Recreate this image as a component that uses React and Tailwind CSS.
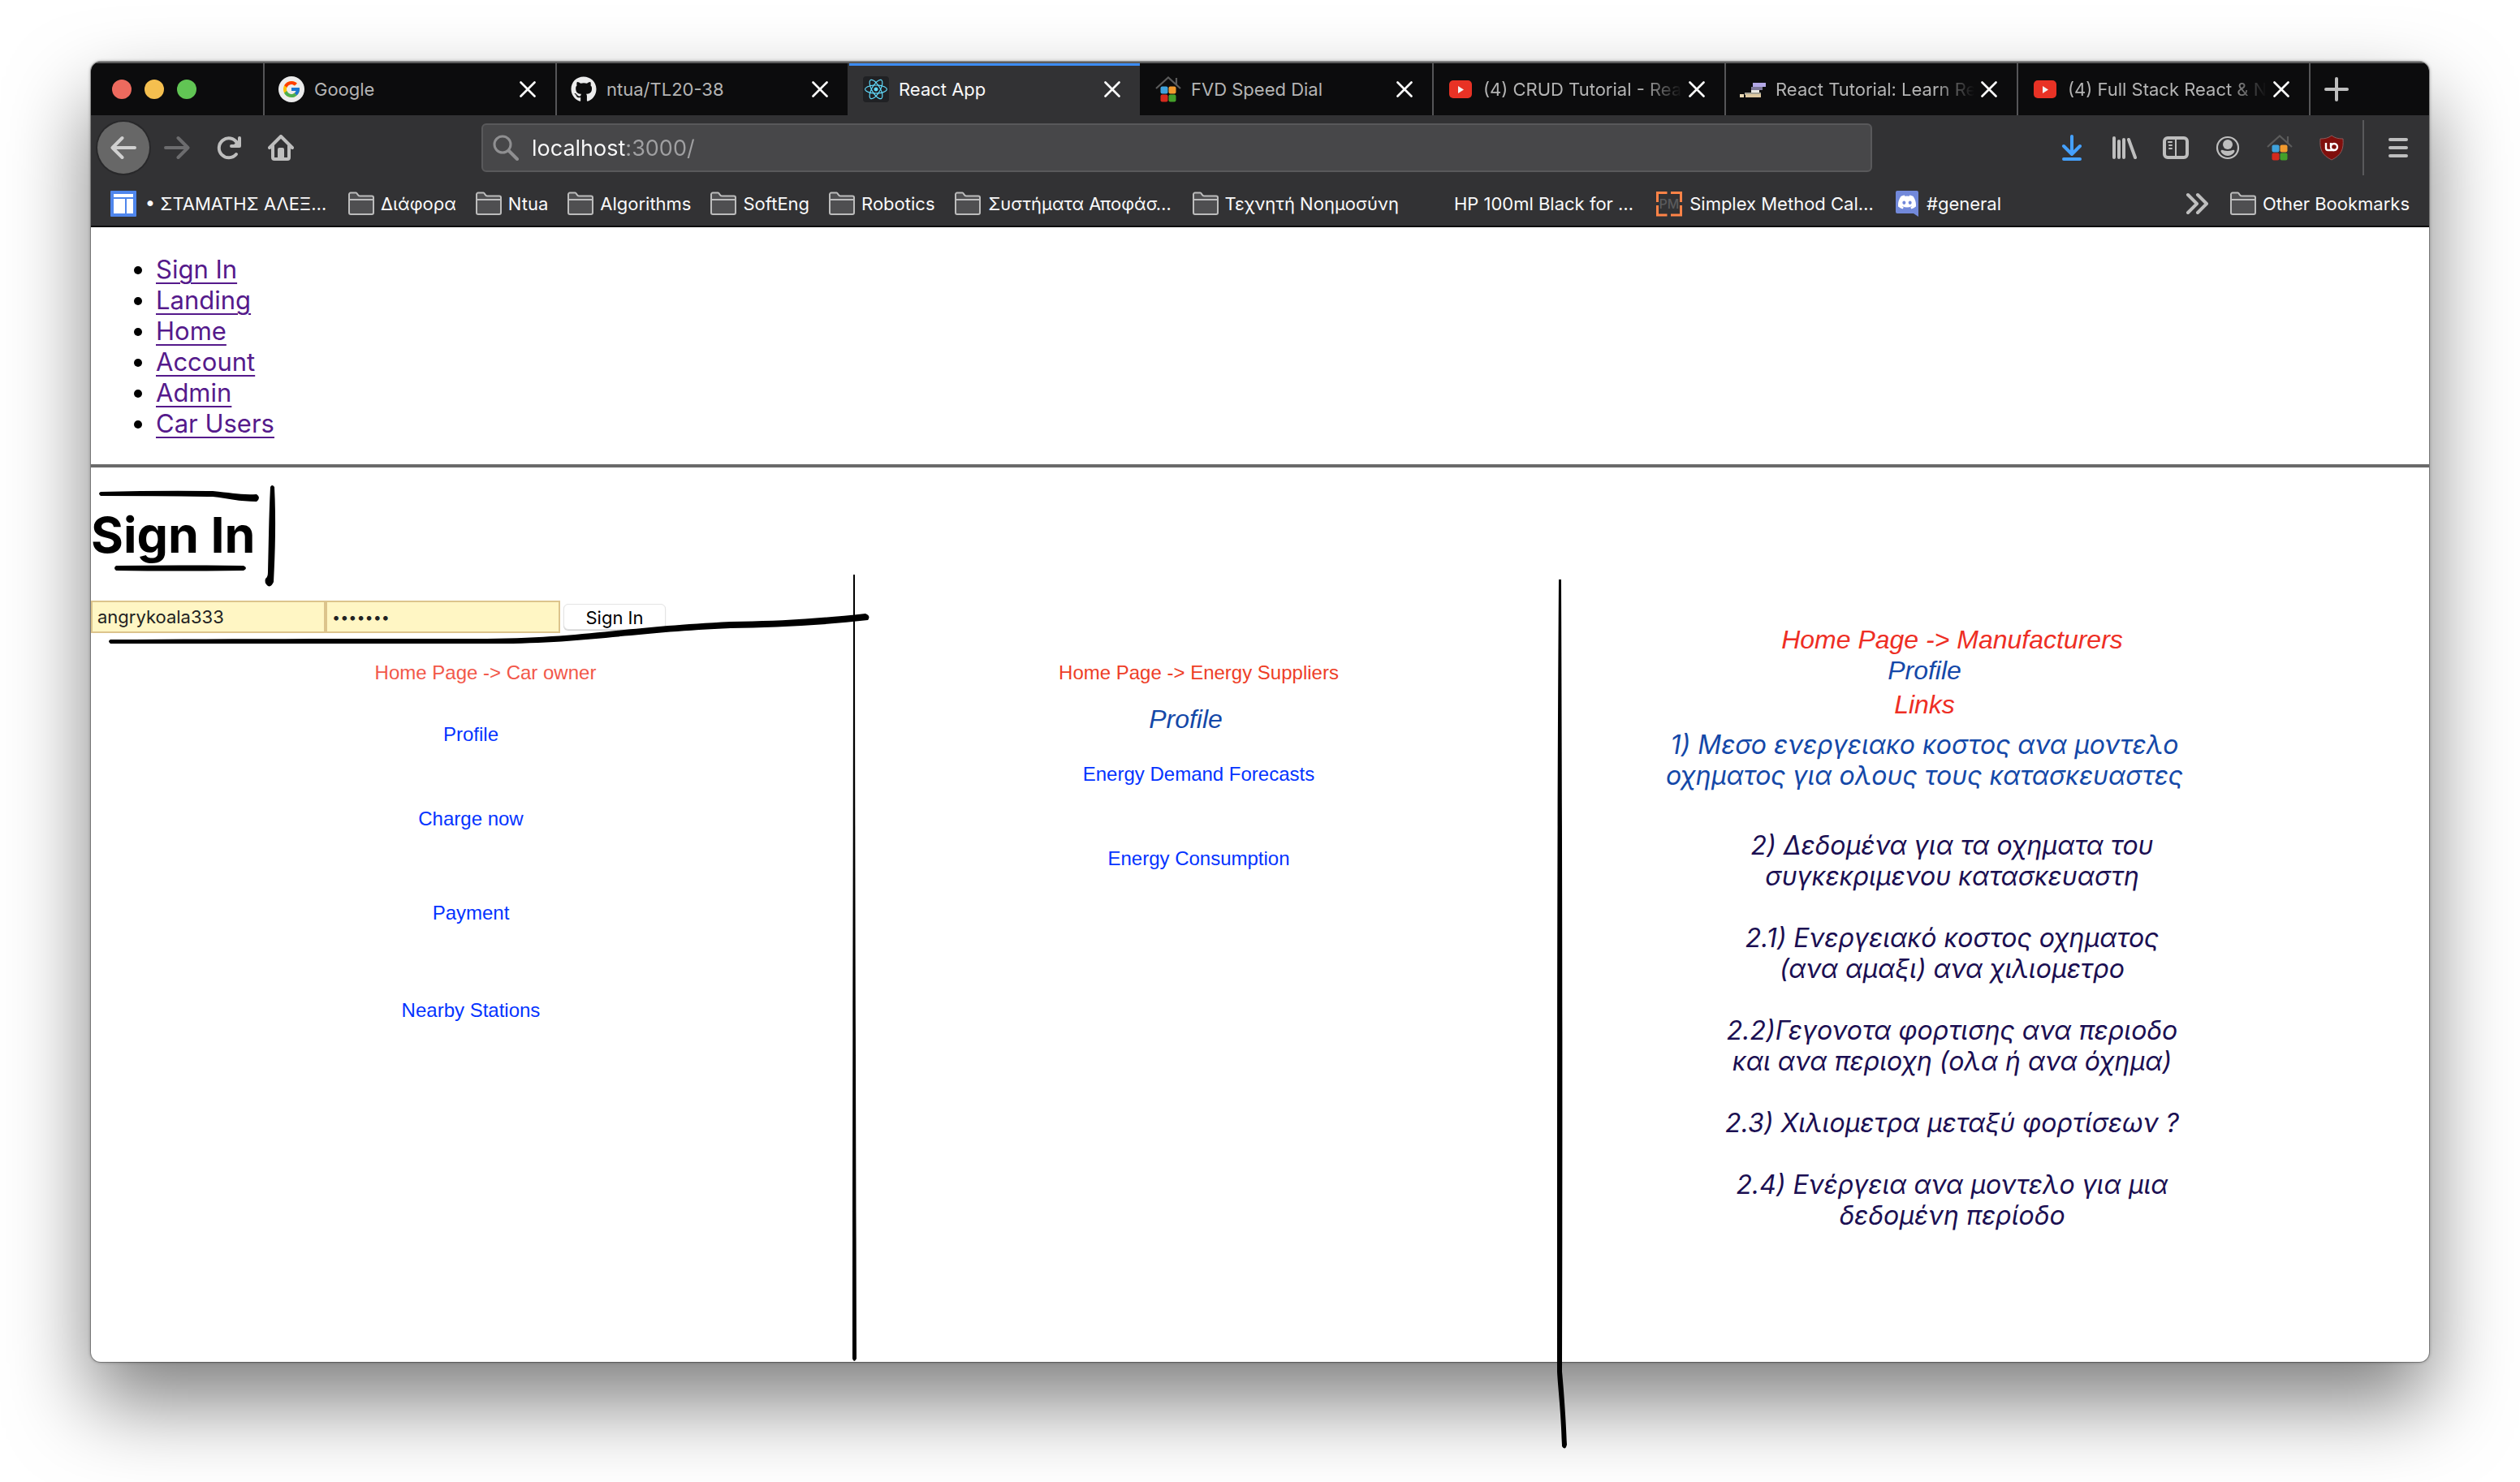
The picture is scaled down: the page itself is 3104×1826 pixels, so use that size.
import React from 'react';
import { FcGoogle } from 'react-icons/fc';
import { FaGithub, FaReact, FaDiscord } from 'react-icons/fa';

const svgClass = 'size-8 shrink-0';

function GoogleIcon() {
  return (
    <span className="flex size-8 shrink-0 items-center justify-center rounded-full bg-[#ececec]">
      <FcGoogle className="size-6" />
    </span>
  );
}

function GithubIcon() {
  return <FaGithub className="size-8 shrink-0 text-[#ececec]" />;
}

function ReactIcon() {
  return (
    <span className="flex size-8 shrink-0 items-center justify-center rounded bg-[#202124]">
      <FaReact className="size-7 text-[#61dafb]" />
    </span>
  );
}

function SpeedDialIcon() {
  return (
    <svg viewBox="0 0 32 32" className={svgClass} fill="none" aria-hidden="true">
      <path d="M1 15 16 1.500l15 13.500M26 2v8" stroke="#5b5b5b" strokeWidth="2.200" />
      <rect x="6.500" y="12.500" width="9" height="9" rx="2" fill="#3fa2dc" />
      <rect x="16.500" y="12.500" width="9" height="9" rx="2" fill="#f29a2e" />
      <rect x="6.500" y="22.500" width="9" height="9" rx="2" fill="#d42a1e" />
      <rect x="16.500" y="22.500" width="9" height="9" rx="2" fill="#43a02a" />
    </svg>
  );
}

function YoutubeIcon() {
  return (
    <svg viewBox="0 0 32 32" className={svgClass} aria-hidden="true">
      <rect x="2" y="5" width="28" height="22" rx="5" fill="#e83225" />
      <path d="M13 12v9l7-4.500z" fill="#f2f2f2" />
    </svg>
  );
}

function TutorialIcon() {
  return (
    <svg viewBox="0 0 32 32" className={svgClass} aria-hidden="true">
      <rect x="16" y="8" width="16" height="5" fill="#b3a8e6" />
      <rect x="14" y="13" width="14" height="4" fill="#7d7798" />
      <rect x="14" y="17" width="10" height="3" fill="#e8e8e4" />
      <rect x="6" y="20" width="20" height="3" fill="#a5a294" />
      <rect x="0" y="22" width="5" height="4" fill="#e9d9b5" />
      <rect x="7" y="22" width="19" height="4" fill="#ddc8a0" />
    </svg>
  );
}

function CloseIcon() {
  return (
    <svg viewBox="0 0 20 20" className="size-5" fill="none" stroke="#fff" strokeWidth="2.600" strokeLinecap="round" aria-hidden="true">
      <path d="M1.500 1.500l17 17M18.500 1.500l-17 17" />
    </svg>
  );
}

function Line({ children, className = svgClass, width = 4 }) {
  return (
    <svg viewBox="0 0 32 32" className={className} fill="none" stroke="currentColor" strokeWidth={width} strokeLinecap="round" strokeLinejoin="round" aria-hidden="true">
      {children}
    </svg>
  );
}

function FolderIcon() {
  return (
    <svg viewBox="0 0 32 32" className={svgClass} fill="#4f4f51" stroke="#bcbcbc" strokeWidth="2" strokeLinejoin="round" aria-hidden="true">
      <path d="M1 27V4.500A2 2 0 0 1 3 2.500h6.500c1.500 0 2 4 4.500 4h15a2 2 0 0 1 2 2V27a2 2 0 0 1-2 2H3a2 2 0 0 1-2-2z" />
      <path d="M1 11h30" />
    </svg>
  );
}

function SheetIcon() {
  return (
    <svg viewBox="0 0 32 32" className={svgClass} aria-hidden="true">
      <rect width="32" height="32" rx="1" fill="#4f86ec" />
      <path d="M4 4h24v4H4zM4 10h14v18H4zM20 10h8v18h-8z" fill="#fff" />
    </svg>
  );
}

function PmIcon() {
  return (
    <span className="relative flex size-8 shrink-0 items-center justify-center text-[16px] font-medium text-[#5a5a5c]">
      PM
      <svg viewBox="0 0 32 32" className="absolute inset-0 size-8" fill="none" stroke="#ff8347" strokeWidth="3" aria-hidden="true">
        <path d="M1.500 14V2.500h12M18 2.500h12.500V14M30.500 18v12H18M13.500 30h-12V18" />
      </svg>
    </span>
  );
}

function DiscordIcon() {
  return (
    <span className="relative flex size-8 shrink-0 items-center justify-center">
      <svg viewBox="0 0 32 32" className="absolute inset-0 size-8" aria-hidden="true">
        <path d="M2 2a2 2 0 0 1 2-2h24a2 2 0 0 1 2 2v30l-6-4H4a2 2 0 0 1-2-2z" fill="#7289da" />
      </svg>
      <FaDiscord className="relative size-6 pb-1 text-white" />
    </span>
  );
}

const tabs = [
  { title: 'Google', icon: <GoogleIcon /> },
  { title: 'ntua/TL20-38', icon: <GithubIcon /> },
  { title: 'React App', icon: <ReactIcon />, active: true },
  { title: 'FVD Speed Dial', icon: <SpeedDialIcon />, afterActive: true },
  { title: '(4) CRUD Tutorial - React', icon: <YoutubeIcon />, fade: true },
  { title: 'React Tutorial: Learn React', icon: <TutorialIcon />, fade: true },
  { title: '(4) Full Stack React & Node', icon: <YoutubeIcon />, fade: true },
];

function Tab({ title, icon, active, afterActive, fade }) {
  const look = active
    ? 'border-[#323234] bg-[#323234] text-[#f9f9fa] shadow-[inset_0_3px_0_#3b8bf5]'
    : afterActive
      ? 'border-[#0c0c0d] text-[#b4b4b4]'
      : 'border-[#555557] text-[#b4b4b4]';
  return (
    <div className={`flex h-full min-w-0 basis-[360px] items-center border-l-2 pr-6 pl-[17px] ${look}`}>
      {icon}
      <button
        type="button"
        className={`ml-3 min-w-0 flex-1 overflow-hidden text-left whitespace-nowrap ${fade ? 'mask-r-from-80% mask-r-to-100%' : ''}`}
      >
        {title}
      </button>
      <button type="button" aria-label={`Close ${title}`} className="ml-2 shrink-0">
        <CloseIcon />
      </button>
    </div>
  );
}

function TabStrip() {
  return (
    <div className="flex h-[66px] items-center border-t-2 border-[#5c5c5c] bg-[#0c0c0d] text-[22px]">
      <div className="flex w-[212px] shrink-0 items-center gap-4 pl-[26px]">
        <span className="size-6 rounded-full bg-[#ed6a5e]" />
        <span className="size-6 rounded-full bg-[#f5bf4f]" />
        <span className="size-6 rounded-full bg-[#61c554]" />
      </div>
      {tabs.map((tab) => (
        <Tab key={tab.title} {...tab} />
      ))}
      <div className="flex h-full items-center border-l-2 border-[#555557] pl-4">
        <button type="button" aria-label="New tab" className="text-[#bebebe]">
          <Line>
            <path d="M16 3v26M3 16h26" />
          </Line>
        </button>
      </div>
    </div>
  );
}

function NavBar() {
  return (
    <div className="flex h-20 items-center bg-[#323234] pr-[22px] pl-2 text-[#bebebe]">
      <button type="button" aria-label="Back" className="flex size-16 items-center justify-center rounded-full bg-[#676767] text-[#d0d0d0] ring-2 ring-[#28282a]">
        <Line>
          <path d="M30 16H3M14.500 4 2.500 16l12 12" />
        </Line>
      </button>
      <div className="ml-[18px] flex items-center gap-8">
        <button type="button" aria-label="Forward" className="text-[#6c6c6e]">
          <Line>
            <path d="M2 16h27M17.500 4l12 12-12 12" />
          </Line>
        </button>
        <button type="button" aria-label="Reload">
          <Line>
            <path d="M25 24a12 12 0 1 1 1-14" />
            <path d="M29 4v10H19" />
            <path d="M28 9v4h-4z" fill="currentColor" />
          </Line>
        </button>
        <button type="button" aria-label="Home">
          <Line>
            <path d="M2 16 16 2l14 14" />
            <path d="M6 14v14a2 2 0 0 0 2 2h16a2 2 0 0 0 2-2V14" />
            <path d="M14 29V18h4v11" />
          </Line>
        </button>
      </div>
      <div className="w-[231px] shrink" />
      <label className="flex h-[60px] min-w-0 flex-1 items-center rounded-md border-2 border-[#59595b] bg-[#474749] pl-3">
        <Line className="size-8 shrink-0 text-[#8f8f91]" width={3}>
          <circle cx="12" cy="12" r="10" />
          <path d="M20 20l10 10" strokeWidth="4" />
        </Line>
        <input
          type="text"
          aria-label="Address"
          defaultValue="localhost:3000/"
          className="ml-4 min-w-0 flex-1 bg-linear-to-r from-[#f9f9fa] from-[116px] to-[#a0a0a2] to-[116px] bg-clip-text pt-0.5 text-[27px] text-transparent caret-white outline-none"
        />
      </label>
      <div className="w-[230px] shrink" />
      <div className="flex items-center gap-8">
        <button type="button" aria-label="Downloads" className="text-[#45a1ff]">
          <Line>
            <path d="M16 2v22M6 14l10 10 10-10M6 30h20" />
          </Line>
        </button>
        <button type="button" aria-label="Library">
          <Line>
            <path d="M4 4v24M10 8v20M16 6v22M22 6l8 22" />
          </Line>
        </button>
        <button type="button" aria-label="Sidebars">
          <Line>
            <rect x="2" y="4" width="28" height="24" rx="4" />
            <path d="M16 4v24M7 9h4M8 13h3M8 17h3" strokeWidth="2" />
          </Line>
        </button>
        <button type="button" aria-label="Account">
          <svg viewBox="0 0 32 32" className={svgClass} aria-hidden="true">
            <circle cx="16" cy="16" r="13" fill="none" stroke="currentColor" strokeWidth="2.200" />
            <circle cx="16" cy="12" r="6" fill="currentColor" />
            <path d="M8 19c2-1 3 1 8 1s6-2 8-1c2 2-3 7-8 7s-10-5-8-7z" fill="currentColor" />
          </svg>
        </button>
        <button type="button" aria-label="Speed Dial">
          <SpeedDialIcon />
        </button>
        <button type="button" aria-label="uBlock Origin">
          <svg viewBox="0 0 32 32" className={svgClass} fill="none" aria-hidden="true">
            <path d="M16 1c4 3 8 4 14 4 1 13-2 20-14 26C4 25 1 18 2 5c6 0 10-1 14-4z" fill="#800f0c" stroke="#8a5a5a" strokeWidth="1" />
            <path d="M9 10v6.500a2.500 2.500 0 0 0 2.500 2.500H19a4 4 0 1 0-4-4v-5" stroke="#fff" strokeWidth="2.400" />
            <path d="M15 15a4 4 0 0 0 4 4" stroke="#fff" strokeWidth="2.400" />
          </svg>
        </button>
      </div>
      <div className="mr-[26px] ml-[22px] h-[68px] w-0.5 bg-[#59595b]" />
      <button type="button" aria-label="Menu">
        <Line>
          <path d="M6 6h20M6 16h20M6 26h20" />
        </Line>
      </button>
    </div>
  );
}

const bookmarks = [
  { title: '• ΣΤΑΜΑΤΗΣ ΑΛΕΞ…', icon: <SheetIcon />, cut: true },
  { title: 'Διάφορα', icon: <FolderIcon /> },
  { title: 'Ntua', icon: <FolderIcon /> },
  { title: 'Algorithms', icon: <FolderIcon /> },
  { title: 'SoftEng', icon: <FolderIcon /> },
  { title: 'Robotics', icon: <FolderIcon /> },
  { title: 'Συστήματα Αποφάσ…', icon: <FolderIcon />, cut: true },
  { title: 'Τεχνητή Νοημοσύνη', icon: <FolderIcon /> },
  { title: 'HP 100ml Black for …', icon: <span className="size-8 shrink-0" />, cut: true },
  { title: 'Simplex Method Cal…', icon: <PmIcon />, cut: true },
  { title: '#general', icon: <DiscordIcon /> },
];

function BookmarksBar() {
  return (
    <div className="flex h-[58px] items-center gap-6 border-b-2 border-[#0c0c0d] bg-[#323234] pt-0.5 pr-6 pl-6 text-[22px] whitespace-nowrap text-[#f9f9fa]">
      {bookmarks.map(({ title, icon, cut }) => (
        <button key={title} type="button" className="flex items-center gap-2">
          {icon}
          <span className={cut ? 'w-[229px] text-center' : ''}>{title}</span>
        </button>
      ))}
      <button type="button" aria-label="More bookmarks" className="ml-auto text-[#bebebe]">
        <Line>
          <path d="M4 5l11 11L4 27M16 5l11 11-11 11" />
        </Line>
      </button>
      <button type="button" className="flex items-center gap-2">
        <FolderIcon />
        Other Bookmarks
      </button>
    </div>
  );
}

const links = ['Sign In', 'Landing', 'Home', 'Account', 'Admin', 'Car Users'];

function SignInForm() {
  return (
    <form className="flex h-10 items-center text-[22px]" onSubmit={(e) => e.preventDefault()}>
      <input
        type="text"
        aria-label="Username"
        defaultValue="angrykoala333"
        className="h-10 w-[289px] border-2 border-[#dcc48c] bg-[#fff6c4] px-1.5 text-[#222]"
      />
      <input
        type="password"
        aria-label="Password"
        defaultValue="koala33"
        className="h-10 w-[289px] border-2 border-[#dcc48c] bg-[#fff6c4] px-1.5 text-lg text-[#222]"
      />
      <button type="submit" className="ml-1 h-8 w-[126px] rounded-md border border-[#e4e4e4] bg-white text-black shadow-[0_1px_1px_#ccc]">
        Sign In
      </button>
    </form>
  );
}

function CarOwnerNotes() {
  return (
    <section>
      <SignInForm />
      <div className="pr-1 text-center font-['Liberation_Sans',sans-serif] text-2xl leading-7 text-[#0433ff]">
        <p className="mt-[35px] pl-9 text-[#f2584a]">Home Page -&gt; Car owner</p>
        <p className="mt-12">Profile</p>
        <p className="mt-19">Charge now</p>
        <p className="mt-22">Payment</p>
        <p className="mt-23">Nearby Stations</p>
      </div>
    </section>
  );
}

function SupplierNotes() {
  return (
    <section className="pt-[75px] text-center font-['Liberation_Sans',sans-serif] text-2xl leading-7 text-[#0433ff]">
      <p className="pr-5 text-[#ee3e27]">Home Page -&gt; Energy Suppliers</p>
      <p className="mt-6 pr-13 text-[32px] leading-[38px] text-[#1448a8] italic">Profile</p>
      <p className="mt-[35px] pr-5">Energy Demand Forecasts</p>
      <p className="mt-19 pr-5">Energy Consumption</p>
    </section>
  );
}

function ManufacturerNotes() {
  return (
    <section className="pt-[29px] pr-26 text-center font-['Inter',sans-serif] text-[32px] leading-[38px] text-[#1b0f52] italic">
      <p className="font-['Liberation_Sans',sans-serif] text-[#ee2e24]">Home Page -&gt; Manufacturers</p>
      <p className="pr-17 font-['Liberation_Sans',sans-serif] text-[#1448a8]">Profile</p>
      <p className="mt-1 pr-17 font-['Liberation_Sans',sans-serif] text-[#ee2e24]">Links</p>
      <p className="mt-3 pr-17 text-[#1448a8]">
        1) Μεσο ενεργειακο κοστος ανα μοντελο
        <br />
        οχηματος για ολους τους κατασκευαστες
      </p>
      <p className="mt-12">
        2) Δεδομένα για τα οχηματα του
        <br />
        συγκεκριμενου κατασκευαστη
      </p>
      <p className="mt-[38px]">
        2.1) Ενεργειακό κοστος οχηματος
        <br />
        (ανα αμαξι) ανα χιλιομετρο
      </p>
      <p className="mt-[38px]">
        2.2)Γεγονοτα φορτισης ανα περιοδο
        <br />
        και ανα περιοχη (ολα ή ανα όχημα)
      </p>
      <p className="mt-[38px]">2.3) Χιλιομετρα μεταξύ φορτίσεων ?</p>
      <p className="mt-[38px]">
        2.4) Ενέργεια ανα μοντελο για μια
        <br />
        δεδομένη περίοδο
      </p>
    </section>
  );
}

function PenStrokes() {
  return (
    <svg viewBox="0 0 3104 1826" preserveAspectRatio="none" className="pointer-events-none absolute inset-0 size-full" aria-hidden="true">
      <path d="M124 606Q200 604 262 605C285 607 295 610 316 609Q322 613 316 618C295 618 280 614 262 612Q190 611 124 611Q120 608 124 606z" />
      <path d="M143 697Q220 696 300 697Q306 700 300 703Q220 704 143 703Q139 700 143 697z" />
      <path d="M333 600Q335 596 338 600C340 640 339 680 337 717Q334 724 330 722Q325 718 327 713Q330 711 330 705C331 670 331 640 333 600z" />
      <path d="M136 788C300 787 450 787 600 787C720 786 760 773 900 766C960 765 1000 763 1066 756Q1073 759 1069 764C1010 771 950 773 900 774C780 779 720 793 610 793C450 793 300 793 136 793Q132 790 136 788z" />
      <path d="M1051 708L1053 708C1053 1000 1054 1300 1055 1674Q1052 1680 1050 1674C1050 1300 1051 1000 1051 708z" />
      <path d="M1920 714L1923 714C1924 1000 1925 1300 1924 1690C1926 1710 1929 1750 1930 1780Q1928 1788 1924 1782C1923 1740 1919 1710 1918 1690C1918 1300 1918 1000 1920 714z" />
    </svg>
  );
}

export default function App() {
  return (
    <div className="relative flex min-h-screen flex-col bg-white px-28 pt-19 pb-37 font-['Inter',sans-serif]">
      <div className="flex flex-1 flex-col overflow-hidden rounded-xl bg-white shadow-[0_0_0_1px_rgba(0,0,0,0.25),0_0_4px_rgba(0,0,0,0.4),0_50px_100px_rgba(0,0,0,0.5)]">
        <TabStrip />
        <NavBar />
        <BookmarksBar />
        <main className="flex-1 text-black">
          <ul className="mt-[33px] mb-[31px] list-disc pl-20 text-[31px] leading-[38px]">
            {links.map((name) => (
              <li key={name}>
                <a href="#" className="text-[#551a8b] underline decoration-2 underline-offset-[5px]">
                  {name}
                </a>
              </li>
            ))}
          </ul>
          <hr className="h-1 border-0 bg-[#6a6a6a]" />
          <h1 className="mt-11 mb-[42px] text-[61px] leading-[78px] font-bold">Sign In</h1>
          <div className="grid grid-cols-[940fr_869fr_1071fr]">
            <CarOwnerNotes />
            <SupplierNotes />
            <ManufacturerNotes />
          </div>
        </main>
      </div>
      <PenStrokes />
    </div>
  );
}
